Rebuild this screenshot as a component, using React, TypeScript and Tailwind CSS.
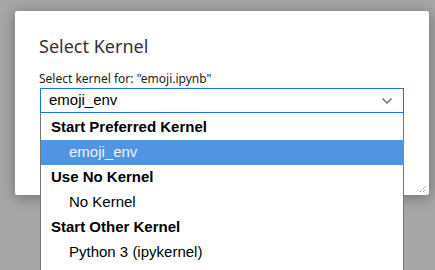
import React from "react";

const groups = [
  { title: "Start Preferred Kernel", items: [{ name: "emoji_env", active: true }] },
  { title: "Use No Kernel", items: [{ name: "No Kernel", active: false }] },
  { title: "Start Other Kernel", items: [{ name: "Python 3 (ipykernel)", active: false }] },
];

export default function App() {
  return (
    <div className="w-[435px] h-[270px] overflow-hidden bg-[#a6a6a6] pt-[11px] pl-[15px] relative">
      <div className="relative w-[414px] h-[184px] bg-white rounded-[2px] shadow-[0_2px_14px_rgba(0,0,0,0.35)] pl-[24px] pt-[23px] font-['Noto_Sans',sans-serif]">
        <h1 className="text-[18px] leading-[24px] text-[#333]">Select Kernel</h1>
        <p className="mt-[13px] text-[12px] leading-[16px] text-[#222]">Select kernel for: "emoji.ipynb"</p>
        <div className="relative mt-[1px] ml-[1px] w-[364px] h-[25px] border border-[#1a73e8] flex items-center justify-between pl-[8px] pr-[10px] font-['Liberation_Sans',sans-serif] text-[15px] text-black">
          <span>emoji_env</span>
          <svg width="12" height="8" viewBox="0 0 12 8" fill="none">
            <path d="M1.5 1.5 L6 6 L10.5 1.5" stroke="#666" strokeWidth="1.3" />
          </svg>
        </div>
        <svg className="absolute right-[2px] bottom-[2px]" width="8" height="8" viewBox="0 0 8 8">
          <path d="M1 7 L7 1 M4 7 L7 4" stroke="#777" strokeWidth="1" strokeDasharray="1 1" />
        </svg>
      </div>
      <div className="absolute left-[40px] top-[113px] w-[364px] h-[170px] bg-white border-x border-[#767676] pt-[2px] font-['Liberation_Sans',sans-serif] text-[15px] text-black">
        {groups.map((g) => (
          <div key={g.title}>
            <div className="h-[25px] flex items-center pl-[10px] font-bold">{g.title}</div>
            {g.items.map((it) => (
              <div
                key={it.name}
                className={
                  it.active
                    ? "h-[25px] flex items-center pl-[28px] bg-[#5294e2] text-[#eef3fb] -mr-[1px]"
                    : "h-[25px] flex items-center pl-[28px]"
                }
              >
                {it.name}
              </div>
            ))}
          </div>
        ))}
      </div>
    </div>
  );
}
